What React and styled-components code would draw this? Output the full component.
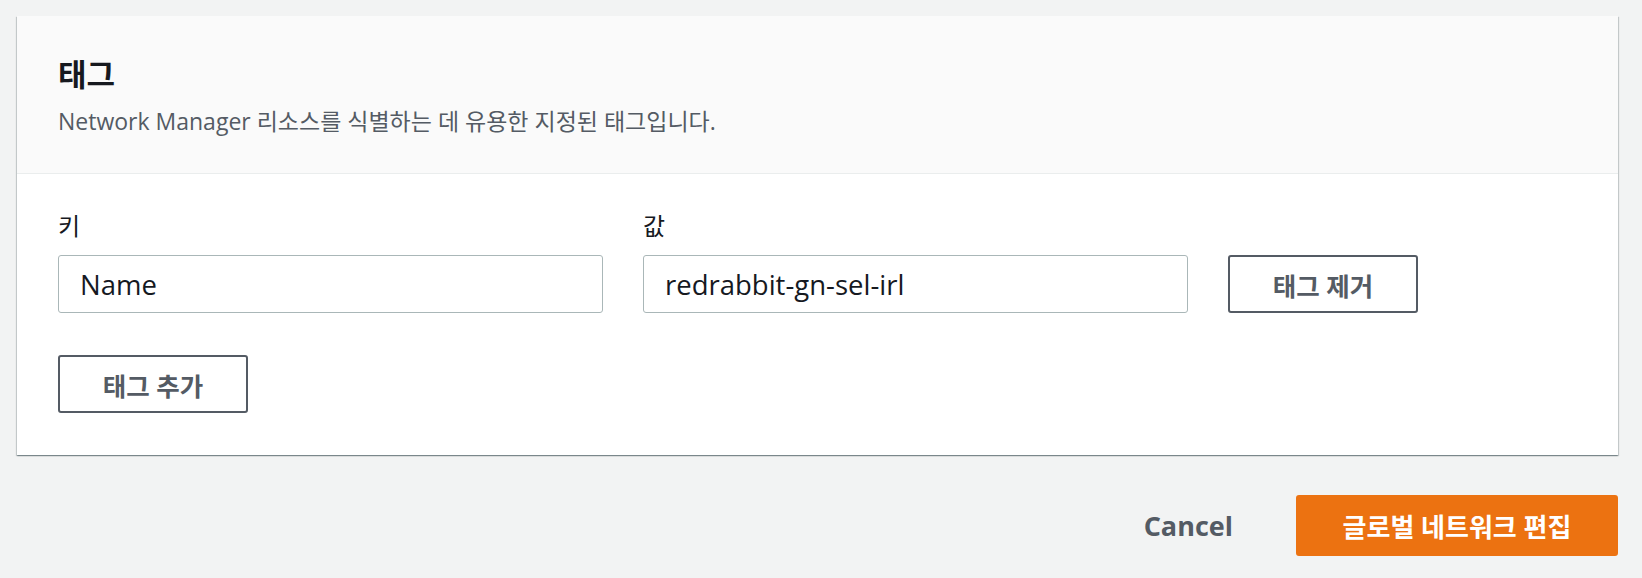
import React from 'react';
import styled, { createGlobalStyle } from 'styled-components';

const GlobalStyle = createGlobalStyle`
  html, body {
    margin: 0;
    padding: 0;
    background: #f2f3f3;
  }
  body {
    font-family: "Open Sans", "Noto Sans CJK KR", sans-serif;
    color: #16191f;
  }
`;

const Page = styled.div`
  padding: 16px 24px 0 17px;
`;

const Container = styled.div`
  background: #ffffff;
  box-shadow: 0 1px 1px 0 rgba(0, 28, 36, 0.3), 1px 1px 1px 0 rgba(0, 28, 36, 0.15),
    -1px 1px 1px 0 rgba(0, 28, 36, 0.15);
`;

const Header = styled.div`
  background: #fafafa;
  border-bottom: 1px solid #eaeded;
  padding: 38px 41px 35px;
`;

const Title = styled.h2`
  margin: 0;
  font-size: 31px;
  line-height: 40px;
  font-weight: 700;
  color: #16191f;
`;

const Description = styled.p`
  margin: 10px 0 0;
  font-size: 23px;
  line-height: 34px;
  color: #545b64;
`;

const Body = styled.div`
  padding: 35px 41px 42px;
`;

const TagGrid = styled.div`
  display: grid;
  grid-template-columns: 545px 545px 190px;
  column-gap: 40px;
  row-gap: 12px;
  align-items: end;
`;

const Label = styled.label`
  font-size: 24px;
  line-height: 34px;
  color: #16191f;
`;

const Input = styled.input`
  box-sizing: border-box;
  width: 100%;
  height: 58px;
  padding: 0 21px;
  border: 1px solid #aab7b8;
  border-radius: 3px;
  background: #fff;
  font-family: "Open Sans", "Noto Sans CJK KR", sans-serif;
  font-size: 27.5px;
  color: #16191f;
  outline: none;
`;

const Button = styled.button`
  box-sizing: border-box;
  height: ${p => (p.primary ? '61px' : '58px')};
  width: ${p => p.width || 'auto'};
  padding: 0;
  border: ${p => (p.primary ? '2px solid #ec7211' : '2px solid #545b64')};
  border-radius: 3px;
  background: ${p => (p.primary ? '#ec7211' : '#fff')};
  color: ${p => (p.primary ? '#fff' : '#545b64')};
  font-family: "Open Sans", "Noto Sans CJK KR", sans-serif;
  font-size: ${p => (p.primary ? '26px' : '25.5px')};
  font-weight: 700;
  cursor: pointer;
`;

const LinkButton = styled.button`
  border: none;
  background: none;
  padding: 0 8px;
  height: 61px;
  color: #545b64;
  font-family: "Open Sans", "Noto Sans CJK KR", sans-serif;
  font-size: 27px;
  font-weight: 700;
  cursor: pointer;
`;

const AddRow = styled.div`
  margin-top: 42px;
`;

const Footer = styled.div`
  display: flex;
  justify-content: flex-end;
  align-items: center;
  gap: 55px;
  margin-top: 40px;
`;

const tags = [{ key: 'Name', value: 'redrabbit-gn-sel-irl' }];

export default function App() {
  return (
    <>
      <GlobalStyle />
      <Page>
        <Container>
          <Header>
            <Title>태그</Title>
            <Description>Network Manager 리소스를 식별하는 데 유용한 지정된 태그입니다.</Description>
          </Header>
          <Body>
            <TagGrid>
              <Label>키</Label>
              <Label>값</Label>
              <span />
              {tags.map(tag => (
                <React.Fragment key={tag.key}>
                  <Input defaultValue={tag.key} />
                  <Input defaultValue={tag.value} />
                  <Button width="190px">태그 제거</Button>
                </React.Fragment>
              ))}
            </TagGrid>
            <AddRow>
              <Button width="190px">태그 추가</Button>
            </AddRow>
          </Body>
        </Container>
        <Footer>
          <LinkButton>Cancel</LinkButton>
          <Button primary width="322px">글로벌 네트워크 편집</Button>
        </Footer>
      </Page>
    </>
  );
}
